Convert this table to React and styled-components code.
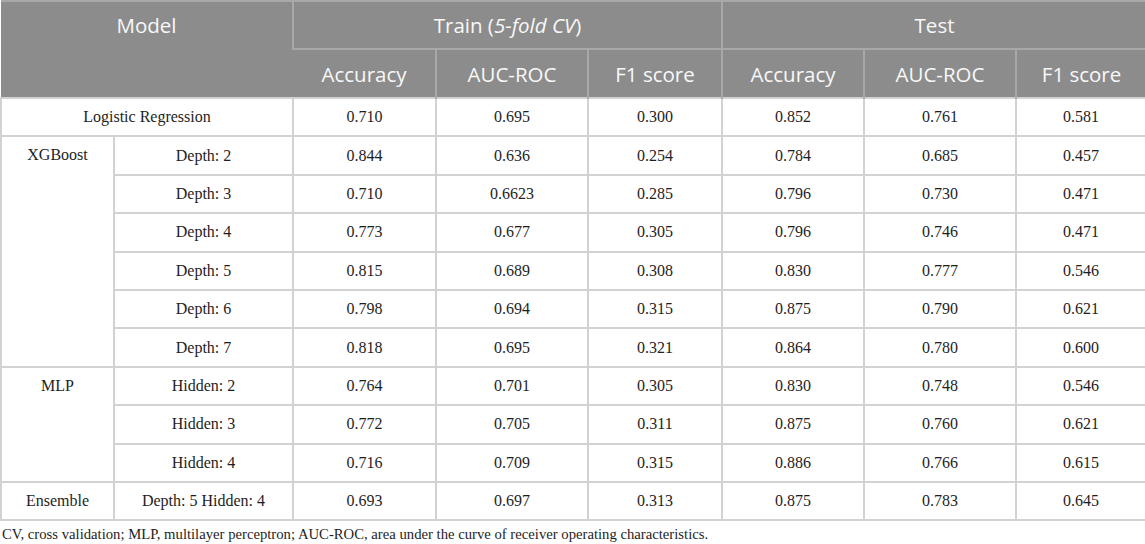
import React from "react";
import styled, { createGlobalStyle } from "styled-components";

const Global = createGlobalStyle`
  html, body { margin: 0; padding: 0; background: #fff; }
  body { font-family: "Liberation Serif", "Times New Roman", serif; color: #1e1e1e; }
`;

const Wrap = styled.div`
  width: 1145px;
`;

const Table = styled.table`
  width: 1145px;
  border-collapse: collapse;
  table-layout: fixed;
`;

const HeadCell = styled.th`
  background: #8c8c8c;
  color: #f8f8f8;
  font-family: "Open Sans", "Noto Sans", sans-serif;
  font-weight: 400;
  font-size: 20.5px;
  height: ${(p) => p.$h || 48}px;
  padding: 0;
  text-align: center;
  vertical-align: ${(p) => (p.$top ? "top" : "middle")};
  padding-top: ${(p) => (p.$top ? 9 : 0)}px;
  border-left: 2px solid #a8a8a8;
  border-top: 2px solid #a8a8a8;
  &:first-child { border-left: none; }
  box-sizing: border-box;
`;

const Cell = styled.td`
  font-size: 16px;
  height: 38.4px;
  padding: 0;
  text-align: center;
  vertical-align: ${(p) => (p.$top ? "top" : "middle")};
  padding-top: ${(p) => (p.$top ? 9 : 0)}px;
  border: 2px solid #d2d2d2;
  box-sizing: border-box;
`;

const Note = styled.p`
  margin: 0;
  padding: 5px 0 0 2px;
  font-size: 14.7px;
  color: #1e1e1e;
`;

const rows = [
  ["Logistic Regression", null, "0.710", "0.695", "0.300", "0.852", "0.761", "0.581"],
];

const groups = [
  {
    name: "XGBoost",
    items: [
      ["Depth: 2", "0.844", "0.636", "0.254", "0.784", "0.685", "0.457"],
      ["Depth: 3", "0.710", "0.6623", "0.285", "0.796", "0.730", "0.471"],
      ["Depth: 4", "0.773", "0.677", "0.305", "0.796", "0.746", "0.471"],
      ["Depth: 5", "0.815", "0.689", "0.308", "0.830", "0.777", "0.546"],
      ["Depth: 6", "0.798", "0.694", "0.315", "0.875", "0.790", "0.621"],
      ["Depth: 7", "0.818", "0.695", "0.321", "0.864", "0.780", "0.600"],
    ],
  },
  {
    name: "MLP",
    items: [
      ["Hidden: 2", "0.764", "0.701", "0.305", "0.830", "0.748", "0.546"],
      ["Hidden: 3", "0.772", "0.705", "0.311", "0.875", "0.760", "0.621"],
      ["Hidden: 4", "0.716", "0.709", "0.315", "0.886", "0.766", "0.615"],
    ],
  },
  {
    name: "Ensemble",
    items: [["Depth: 5 Hidden: 4", "0.693", "0.697", "0.313", "0.875", "0.783", "0.645"]],
  },
];

const widths = [113, 179, 143, 152, 134, 142, 152, 130];

export default function App() {
  return (
    <Wrap>
      <Global />
      <Table>
        <colgroup>
          {widths.map((w, i) => (
            <col key={i} style={{ width: w }} />
          ))}
        </colgroup>
        <thead>
          <tr>
            <HeadCell colSpan={2} rowSpan={2} $top $h={48}>Model</HeadCell>
            <HeadCell colSpan={3} $h={48}>
              Train (<i>5-fold CV</i>)
            </HeadCell>
            <HeadCell colSpan={3} $h={48}>Test</HeadCell>
          </tr>
          <tr>
            <HeadCell $h={49}>Accuracy</HeadCell>
            <HeadCell $h={49}>AUC-ROC</HeadCell>
            <HeadCell $h={49}>F1 score</HeadCell>
            <HeadCell $h={49}>Accuracy</HeadCell>
            <HeadCell $h={49}>AUC-ROC</HeadCell>
            <HeadCell $h={49}>F1 score</HeadCell>
          </tr>
        </thead>
        <tbody>
          {rows.map((r) => (
            <tr key={r[0]}>
              <Cell colSpan={2}>{r[0]}</Cell>
              {r.slice(2).map((v, i) => (
                <Cell key={i}>{v}</Cell>
              ))}
            </tr>
          ))}
          {groups.map((g) =>
            g.items.map((it, idx) => (
              <tr key={g.name + idx}>
                {idx === 0 && (
                  <Cell rowSpan={g.items.length} $top={g.items.length > 1}>
                    {g.name}
                  </Cell>
                )}
                {it.map((v, i) => (
                  <Cell key={i}>{v}</Cell>
                ))}
              </tr>
            ))
          )}
        </tbody>
      </Table>
      <Note>
        CV, cross validation; MLP, multilayer perceptron; AUC-ROC, area under the curve of receiver operating characteristics.
      </Note>
    </Wrap>
  );
}
